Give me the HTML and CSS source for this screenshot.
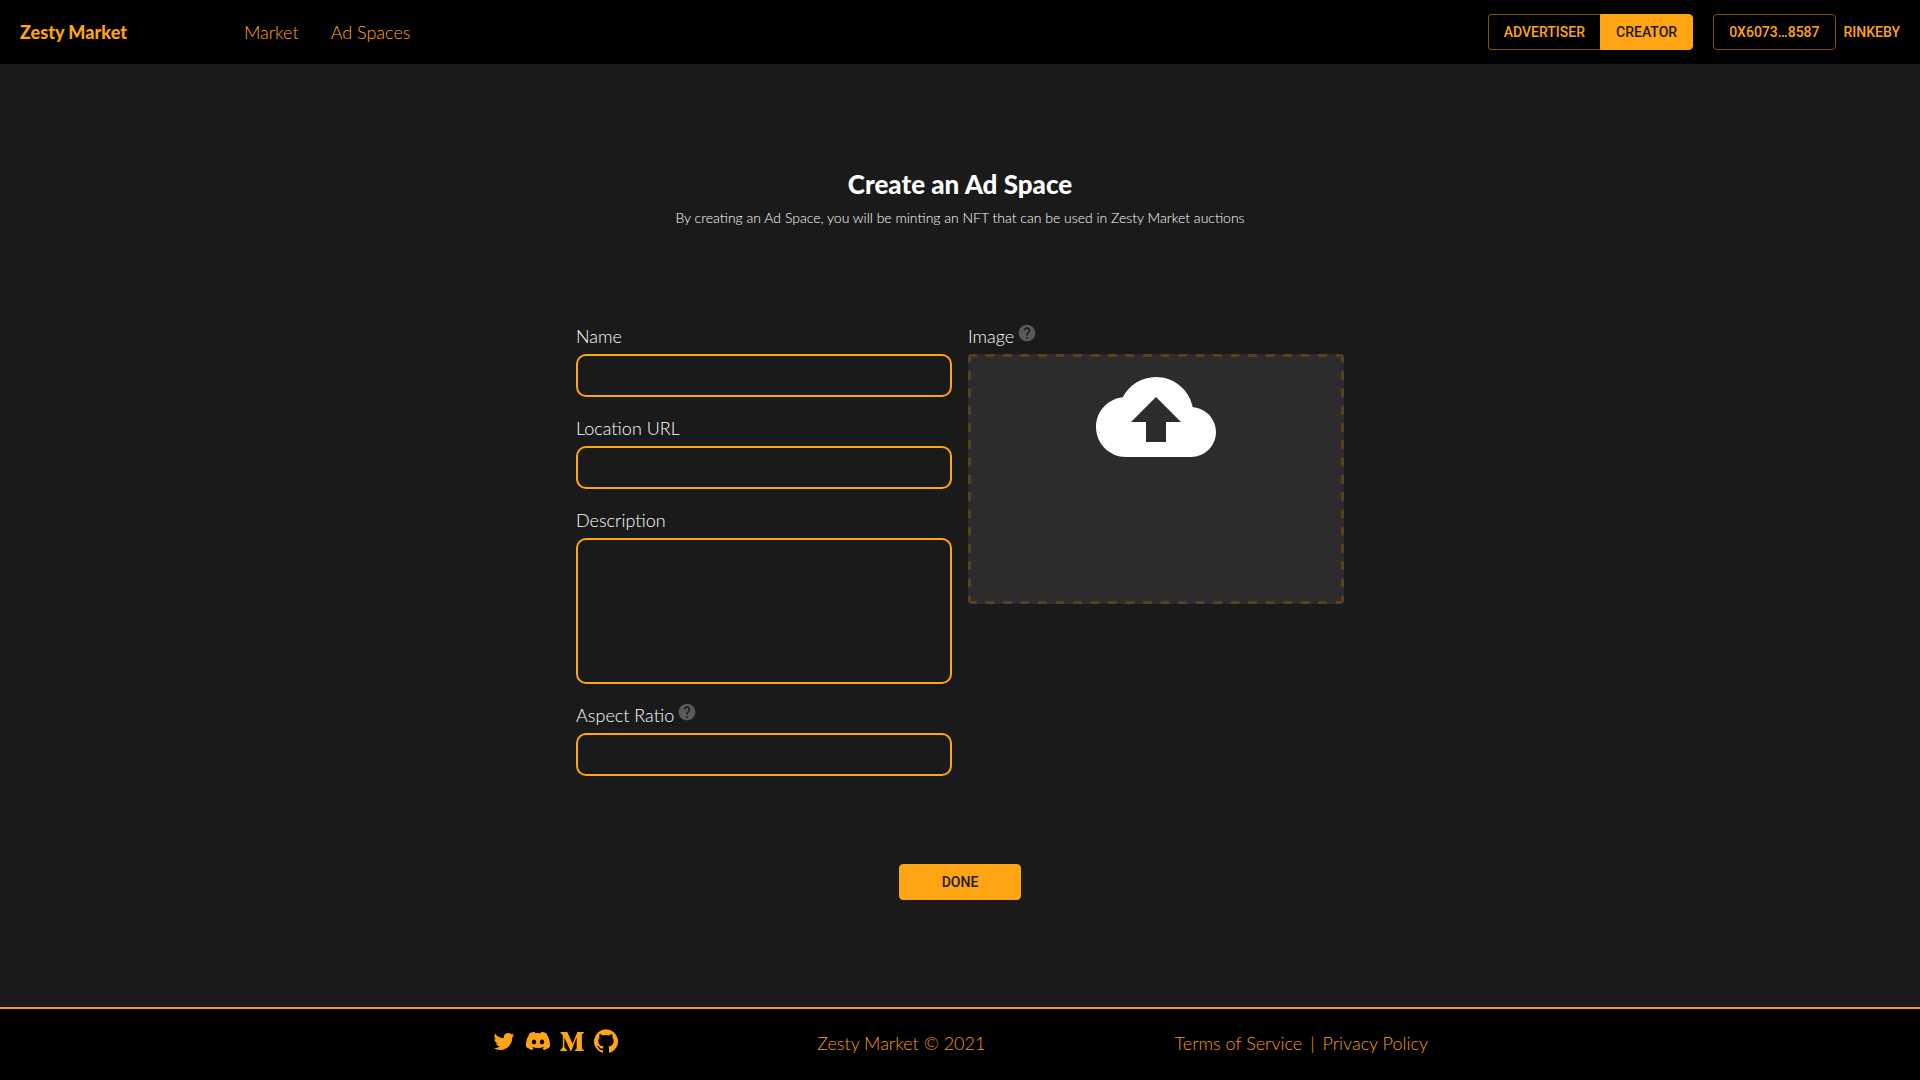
FILE: index.html
```html
<!DOCTYPE html>
<html lang="en">
<head>
  <meta charset="utf-8">
  <meta name="viewport" content="width=device-width, initial-scale=1">
  <title>Create an Ad Space - Zesty Market</title>
  <link rel="stylesheet" href="styles.css">
</head>
<body>
  <svg class="sprite" aria-hidden="true">
    <symbol id="help" viewBox="0 0 24 24"><path d="M12 2C6.48 2 2 6.48 2 12s4.480 10 10 10 10-4.480 10-10S17.520 2 12 2zm1 17h-2v-2h2v2zm2.070-7.750l-.9.920C13.450 12.900 13 13.500 13 15h-2v-.5c0-1.100.45-2.100 1.170-2.830l1.240-1.260c.37-.36.59-.86.59-1.410 0-1.100-.9-2-2-2s-2 .9-2 2H8c0-2.210 1.790-4 4-4s4 1.790 4 4c0 .88-.36 1.680-.93 2.250z"/></symbol>
  </svg>

  <header class="topbar">
    <a class="brand" href="#">Zesty Market</a>
    <nav class="nav">
      <a href="#">Market</a>
      <a href="#">Ad Spaces</a>
    </nav>
    <div class="account">
      <div class="role-switch">
        <button class="btn btn-outline" type="button">ADVERTISER</button>
        <button class="btn btn-fill" type="button">CREATOR</button>
      </div>
      <button class="btn btn-outline" type="button">0X6073…8587</button>
      <span class="network">RINKEBY</span>
    </div>
  </header>

  <main class="page">
    <h1>Create an Ad Space</h1>
    <p class="intro">By creating an Ad Space, you will be minting an NFT that can be used in Zesty Market auctions</p>

    <form class="form">
      <div class="columns">
        <div class="column">
          <div class="field">
            <label for="name">Name</label>
            <input id="name" type="text">
          </div>
          <div class="field">
            <label for="location">Location URL</label>
            <input id="location" type="text">
          </div>
          <div class="field">
            <label for="description">Description</label>
            <textarea id="description"></textarea>
          </div>
          <div class="field">
            <label for="ratio">Aspect Ratio <svg class="help"><use href="#help"/></svg></label>
            <input id="ratio" type="text">
          </div>
        </div>
        <div class="column">
          <div class="field">
            <label for="upload">Image <svg class="help"><use href="#help"/></svg></label>
            <button class="dropzone" id="upload" type="button">
              <svg viewBox="0 0 24 24" class="cloud"><path d="M19.350 10.040C18.670 6.590 15.640 4 12 4 9.110 4 6.600 5.640 5.350 8.040 2.340 8.360 0 10.910 0 14c0 3.310 2.690 6 6 6h13c2.760 0 5-2.240 5-5 0-2.640-2.050-4.780-4.650-4.960zM14 13v4h-4v-4H7l5-5 5 5h-3z"/></svg>
            </button>
          </div>
        </div>
      </div>
      <button class="btn btn-fill done" type="submit">DONE</button>
    </form>
  </main>

  <footer class="footer">
    <div class="footer-inner">
      <div class="social">
        <a href="#" aria-label="Twitter"><svg viewBox="0 0 24 24"><path d="M22.460 6c-.77.35-1.600.58-2.460.69.88-.53 1.560-1.370 1.880-2.380-.83.5-1.750.85-2.720 1.050C18.370 4.500 17.260 4 16 4c-2.350 0-4.270 1.920-4.270 4.290 0 .34.04.67.11.98C8.280 9.090 5.110 7.380 3 4.790c-.37.63-.58 1.370-.58 2.150 0 1.490.75 2.810 1.910 3.560-.71 0-1.370-.2-1.950-.5v.03c0 2.080 1.480 3.820 3.440 4.210a4.220 4.220 0 0 1-1.930.07 4.280 4.280 0 0 0 4 2.980 8.521 8.521 0 0 1-5.330 1.840c-.34 0-.68-.02-1.020-.06C3.440 20.290 5.700 21 8.120 21 16 21 20.330 14.460 20.330 8.790c0-.19 0-.37-.01-.56.84-.6 1.560-1.360 2.140-2.230z"/></svg></a>
        <a href="#" aria-label="Discord"><svg viewBox="0 0 24 24"><path d="M20.317 4.370a19.791 19.791 0 0 0-4.885-1.515.074.074 0 0 0-.079.037c-.21.375-.444.865-.608 1.250a18.270 18.270 0 0 0-5.487 0 12.640 12.640 0 0 0-.617-1.250.077.077 0 0 0-.079-.037A19.736 19.736 0 0 0 3.677 4.370a.07.07 0 0 0-.032.027C.533 9.046-.32 13.580.099 18.058a.082.082 0 0 0 .031.056 19.900 19.900 0 0 0 5.993 3.030.078.078 0 0 0 .084-.028c.462-.63.874-1.295 1.226-1.994a.076.076 0 0 0-.042-.106 13.107 13.107 0 0 1-1.872-.892.077.077 0 0 1-.008-.128c.126-.094.252-.192.372-.291a.074.074 0 0 1 .078-.011c3.928 1.793 8.180 1.793 12.061 0a.074.074 0 0 1 .079.010c.12.099.246.198.373.292a.077.077 0 0 1-.007.128 12.299 12.299 0 0 1-1.873.891.077.077 0 0 0-.041.107c.36.698.772 1.363 1.225 1.993a.076.076 0 0 0 .084.029 19.839 19.839 0 0 0 6.002-3.030.077.077 0 0 0 .032-.055c.5-5.177-.838-9.674-3.549-13.660a.061.061 0 0 0-.031-.029zM8.020 15.331c-1.183 0-2.157-1.086-2.157-2.419s.956-2.419 2.157-2.419c1.210 0 2.176 1.095 2.157 2.419 0 1.333-.956 2.419-2.157 2.419zm7.975 0c-1.183 0-2.157-1.086-2.157-2.419s.955-2.419 2.157-2.419c1.210 0 2.176 1.095 2.157 2.419 0 1.333-.946 2.419-2.157 2.419z"/></svg></a>
        <a href="#" aria-label="Medium"><svg viewBox="0 0 24 24"><path d="M2.846 6.870c.03-.295-.083-.586-.303-.784L.303 3.387V3h6.958l5.378 11.795L17.367 3H24v.403L22.084 5.250a.538.538 0 0 0-.213.538v13.500a.538.538 0 0 0 .213.537L23.955 21.600V22h-9.412v-.403l1.939-1.847c.19-.19.19-.246.19-.537V8.200l-5.389 13.700h-.728L4.281 8.300v9.182c-.052.386.076.774.347 1.053l2.521 3.058V22H0v-.403l2.521-3.058a1.220 1.220 0 0 0 .325-1.053V6.870z"/></svg></a>
        <a href="#" aria-label="GitHub"><svg viewBox="0 0 24 24"><path d="M12 .3a12 12 0 0 0-3.800 23.400c.6.1.8-.3.8-.6v-2c-3.300.7-4-1.600-4-1.600-.6-1.400-1.400-1.800-1.400-1.800-1-.7.1-.7.1-.7 1.200 0 1.900 1.200 1.900 1.200 1 1.800 2.800 1.300 3.500 1 0-.8.4-1.300.7-1.600-2.700-.3-5.500-1.300-5.500-6 0-1.200.5-2.300 1.300-3.100-.2-.4-.6-1.600 0-3.200 0 0 1-.3 3.400 1.200a11.500 11.500 0 0 1 6 0c2.300-1.500 3.300-1.200 3.300-1.200.6 1.600.2 2.800 0 3.200.9.8 1.300 1.900 1.300 3.200 0 4.600-2.800 5.600-5.500 5.900.5.4.9 1 .9 2.200v3.300c0 .3.1.7.8.6A12 12 0 0 0 12 .3"/></svg></a>
      </div>
      <span>Zesty Market © 2021</span>
      <div class="legal">
        <a href="#">Terms of Service</a>
        <span>|</span>
        <a href="#">Privacy Policy</a>
      </div>
    </div>
  </footer>
</body>
</html>
```
FILE: styles.css
```css
:root {
  --accent: #ffa413;
  --accent-dim: #80520a;
  --surface: #1a1a1a;
  --dash: #574220;
}

* {
  box-sizing: border-box;
}

body {
  margin: 0;
  min-height: 100vh;
  display: flex;
  flex-direction: column;
  background: var(--surface);
  color: #fff;
  font-family: Lato, "Liberation Sans", sans-serif;
  font-size: 18px;
  font-weight: 300;
  line-height: 24px;
}

a {
  color: inherit;
  text-decoration: none;
}

svg {
  fill: currentColor;
}

.sprite {
  display: none;
}

.topbar {
  display: flex;
  align-items: center;
  height: 64px;
  padding: 0 20px;
  background: #000;
  color: var(--accent);
}

.brand {
  width: 224px;
  font-weight: 900;
}

.nav {
  display: flex;
  gap: 32px;
}

.account {
  display: flex;
  align-items: center;
  margin-left: auto;
}

.role-switch {
  display: flex;
  margin-right: 20px;
}

.btn {
  height: 36px;
  padding: 0 15px;
  border: 1px solid var(--accent);
  border-radius: 4px;
  font: 500 14px/24px Roboto, sans-serif;
  cursor: pointer;
}

.btn-outline {
  border-color: var(--accent-dim);
  background: transparent;
  color: var(--accent);
}

.btn-fill {
  background: var(--accent);
  color: #211a10;
}

.role-switch .btn-outline {
  border-right: 0;
  border-radius: 4px 0 0 4px;
}

.role-switch .btn-fill {
  border-radius: 0 4px 4px 0;
}

.network {
  margin-left: 8px;
  font: 500 14px/24px Roboto, sans-serif;
}

.page {
  flex: 1;
  padding: 104px 24px;
}

h1 {
  margin: 0;
  font-size: 26px;
  font-weight: 900;
  line-height: 32px;
  text-align: center;
}

.intro {
  margin: 8px 0 0;
  font-size: 14px;
  line-height: 20px;
  text-align: center;
}

.form {
  display: flex;
  flex-direction: column;
  align-items: center;
  margin-top: 93px;
}

.columns {
  display: grid;
  grid-template-columns: 1fr 1fr;
  gap: 16px;
  width: 100%;
  max-width: 768px;
}

.column {
  display: flex;
  flex-direction: column;
  gap: 16px;
}

.field {
  display: flex;
  flex-direction: column;
}

.field label {
  display: flex;
  gap: 3px;
  height: 33px;
  line-height: 30px;
}

.help {
  width: 20px;
  height: 20px;
  margin-top: 2px;
  color: #5a5a5a;
}

input,
textarea {
  width: 100%;
  height: 43px;
  padding: 8px 12px;
  border: 2px solid var(--accent);
  border-radius: 10px;
  background: transparent;
  color: #fff;
  font: inherit;
}

textarea {
  height: 146px;
  resize: none;
}

/* Wide dashes on all four edges, each edge starting and ending on a dash */
.dropzone {
  display: flex;
  justify-content: center;
  height: 250px;
  padding: 3px;
  border: 0;
  border-radius: 4px;
  background-color: #2c2c2c;
  background-image:
    linear-gradient(to right, var(--dash) 50%, transparent 50%),
    linear-gradient(to right, var(--dash) 50%, transparent 50%),
    linear-gradient(to bottom, var(--dash) 50%, transparent 50%),
    linear-gradient(to bottom, var(--dash) 50%, transparent 50%);
  background-position: left top, left bottom, left top, right top;
  background-repeat: repeat-x, repeat-x, repeat-y, repeat-y;
  background-size:
    calc((100% - 8px) / 21) 3px,
    calc((100% - 8px) / 21) 3px,
    3px calc((100% - 8px) / 14),
    3px calc((100% - 8px) / 14);
  color: #fff;
}

.cloud {
  width: 120px;
  height: 120px;
}

.done {
  width: 122px;
  margin-top: 88px;
}

.footer {
  height: 73px;
  border-top: 2px solid #f39c12;
  background: #000;
  color: #f39c12;
}

.footer-inner {
  display: flex;
  align-items: center;
  justify-content: space-between;
  max-width: 936px;
  height: 100%;
  margin: 0 auto;
  padding-bottom: 4px;
}

.social {
  display: flex;
  gap: 10px;
  padding: 0 10px 4px 0;
  color: var(--accent);
}

.social a,
.social svg {
  display: block;
  width: 24px;
  height: 24px;
}

.legal {
  display: flex;
  gap: 8px;
}
```
